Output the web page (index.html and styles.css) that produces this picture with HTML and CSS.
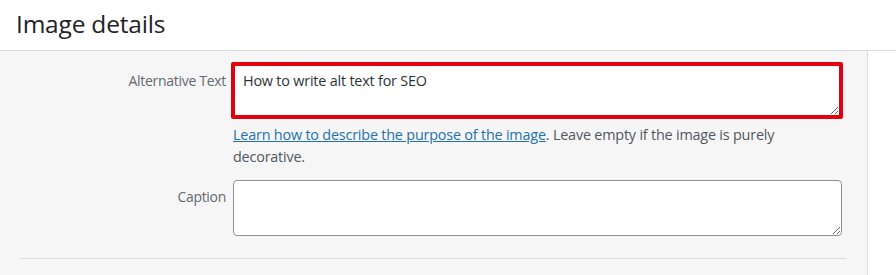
FILE: index.html
```html
<!DOCTYPE html>
<html lang="en">
<head>
    <meta charset="UTF-8">
    <meta name="viewport" content="width=device-width, initial-scale=1.0">
    <title>Image details</title>
    <link rel="stylesheet" href="styles.css">
</head>
<body>

    <div class="modal-header">
        <h1>Image details</h1>
    </div>

    <div class="settings">
        <div class="setting">
            <label class="name" for="alt-text">Alternative Text</label>
            <div class="field">
                <div class="highlight">
                    <textarea id="alt-text" class="alt-input">How to write alt text for SEO</textarea>
                </div>
                <p class="description"><a href="#">Learn how to describe the purpose of the image</a>. Leave empty if the image is purely decorative.</p>
            </div>
        </div>

        <div class="setting">
            <label class="name caption-name" for="caption">Caption</label>
            <div class="field">
                <textarea id="caption" class="caption-input"></textarea>
            </div>
        </div>

        <hr class="divider">
    </div>

</body>
</html>
```

FILE: styles.css
```css
body {
    margin: 0;
    font-family: "Open Sans", "Noto Sans", Arial, sans-serif;
    color: #1d2327;
    background: #fff;
    overflow: hidden;
}

.modal-header {
    height: 51px;
    border-bottom: 1px solid #dcdcde;
    padding-left: 16px;
    box-sizing: border-box;
    display: flex;
    align-items: center;
}

.modal-header h1 {
    margin: 0;
    font-size: 24.5px;
    font-weight: 400;
    letter-spacing: -0.2px;
    line-height: 1;
    padding-bottom: 1px;
}

.settings {
    width: 868px;
    height: 224px;
    box-sizing: border-box;
    background: #f6f6f6;
    border-right: 1px solid #dcdcde;
    padding: 11px 0 0 0;
}

.setting {
    display: grid;
    grid-template-columns: 226px 612px;
    column-gap: 5px;
    margin-bottom: 9px;
}

.name {
    text-align: right;
    font-size: 14px;
    color: #646970;
    padding-top: 9px;
    letter-spacing: -0.3px;
}

.caption-name {
    padding-top: 10px;
}

.field {
    display: flex;
    flex-direction: column;
}

.highlight {
    border: 4px solid #e3000f;
    border-radius: 2px;
    height: 57px;
    box-sizing: border-box;
    display: flex;
}

textarea {
    font-family: inherit;
    font-size: 14.4px;
    color: #2c3338;
    background: #fff;
    resize: vertical;
    box-sizing: border-box;
    outline: none;
}

.alt-input {
    flex: 1;
    border: none;
    padding: 5px 8px;
    letter-spacing: -0.2px;
}

.description {
    margin: 5px 0 0 2px;
    font-size: 14.4px;
    line-height: 22px;
    color: #50575e;
    width: 560px;
    letter-spacing: -0.2px;
}

.description a {
    color: #2271b1;
}

.caption-input {
    margin-left: 2px;
    width: 609px;
    height: 56px;
    border: 1px solid #8c8f94;
    border-radius: 4px;
    margin-top: 3px;
}

.divider {
    border: none;
    border-top: 1px solid #dcdcde;
    margin: 22px 21px 0 20px;
}
```
